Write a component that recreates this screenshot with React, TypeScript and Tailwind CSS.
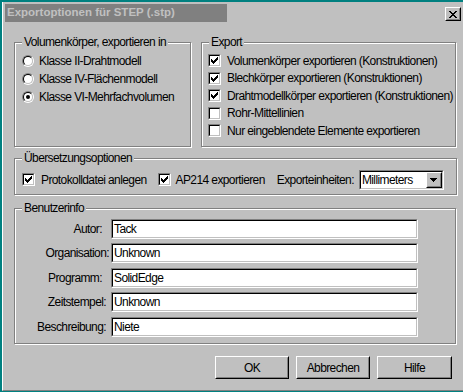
import React from "react";

const FONT = { fontFamily: '"Liberation Sans", Arial, sans-serif' };

function Sunken({ className = "", children }: { className?: string; children?: React.ReactNode }) {
  return (
    <div className={"border border-t-[#808080] border-l-[#808080] border-b-white border-r-white " + className}>
      <div className="w-full h-full border border-t-black border-l-black border-b-[#c0c0c0] border-r-[#c0c0c0] bg-white overflow-hidden">
        {children}
      </div>
    </div>
  );
}

function Raised({ className = "", children }: { className?: string; children?: React.ReactNode }) {
  return (
    <div className={"border border-t-white border-l-white border-b-black border-r-black bg-[#c0c0c0] " + className}>
      <div className="w-full h-full border border-t-[#c0c0c0] border-l-[#c0c0c0] border-b-[#808080] border-r-[#808080] flex items-center justify-center">
        {children}
      </div>
    </div>
  );
}

function CheckMark() {
  return (
    <svg width="7" height="7" viewBox="0 0 7 7" shapeRendering="crispEdges" className="block">
      <path
        fill="#000"
        d="M6 0h1v1h-1zM5 1h2v1h-2zM0 2h1v1h-1zM4 2h3v1h-3zM0 3h2v1h-2zM3 3h3v1h-3zM0 4h5v1h-5zM1 5h3v1h-3zM2 6h1v1h-1z"
      />
    </svg>
  );
}

function Checkbox({ checked }: { checked: boolean }) {
  return (
    <Sunken className="w-[13px] h-[13px] shrink-0">
      <div className="w-full h-full flex items-center justify-center">{checked ? <CheckMark /> : null}</div>
    </Sunken>
  );
}

function Radio({ checked }: { checked: boolean }) {
  return (
    <div className="w-[12px] h-[12px] rounded-full border border-t-[#808080] border-l-[#808080] border-b-white border-r-white shrink-0">
      <div className="w-full h-full rounded-full border border-t-black border-l-black border-b-[#c0c0c0] border-r-[#c0c0c0] bg-white flex items-center justify-center">
        {checked ? <div className="w-[4px] h-[4px] rounded-full bg-black" /> : null}
      </div>
    </div>
  );
}

function Group({ label, className = "", children }: { label: string; className?: string; children?: React.ReactNode }) {
  return (
    <div className={"relative border border-[#808080] shadow-[inset_1px_1px_0_#fff,1px_1px_0_#fff] " + className}>
      <span className="absolute left-[7px] top-[-8px] px-[2px] bg-[#c0c0c0] leading-[15px] whitespace-nowrap">{label}</span>
      {children}
    </div>
  );
}

function TextRow({ label, value, pr, mt }: { label: string; value: string; pr: string; mt: string }) {
  return (
    <div className={"flex items-center h-[20px] " + mt}>
      <div className={"w-[96px] text-right whitespace-nowrap " + pr}>{label}</div>
      <Sunken className="w-[307px] h-[20px]">
        <div className="h-full flex items-center pl-[1px] leading-none">{value}</div>
      </Sunken>
    </div>
  );
}

export default function App() {
  return (
    <div className="w-[463px] h-[392px] bg-[#008080] pt-[2px] pl-[2px] overflow-hidden">
      <div
        className="w-[461px] h-[389px] bg-[#c0c0c0] border-l border-l-white border-b border-b-[#808080] flex flex-col text-[12px] tracking-[-0.6px] text-black"
        style={FONT}
      >
        {/* title row */}
        <div className="flex items-start mt-[2px]">
          <div className="ml-[2px] w-[222px] h-[18px] bg-[#808080] flex items-center pl-[2px]">
            <span className="text-[#c0c0c0] font-bold text-[11.5px] tracking-normal whitespace-nowrap">
              Exportoptionen für STEP (.stp)
            </span>
          </div>
          <Raised className="ml-auto mr-[2px] mt-[3px] w-[16px] h-[14px]">
            <svg width="8" height="7" viewBox="0 0 8 7" shapeRendering="crispEdges" className="block">
              <path
                fill="#000"
                d="M0 0h2v1h-2zM6 0h2v1h-2zM1 1h2v1h-2zM5 1h2v1h-2zM2 2h4v1h-4zM3 3h2v1h-2zM2 4h4v1h-4zM1 5h2v1h-2zM5 5h2v1h-2zM0 6h2v1h-2zM6 6h2v1h-2z"
              />
            </svg>
          </Raised>
        </div>

        {/* top groups */}
        <div className="flex mt-[20px] ml-[11px] gap-[10px]">
          <Group label="Volumenkörper, exportieren in" className="w-[177px] h-[105px]">
            <div className="flex flex-col pt-[9px] pl-[7px]">
              {[
                ["Klasse II-Drahtmodell", false],
                ["Klasse IV-Flächenmodell", false],
                ["Klasse VI-Mehrfachvolumen", true],
              ].map(([t, c]) => (
                <div key={t as string} className="flex items-center h-[18px] gap-[5px] whitespace-nowrap">
                  <Radio checked={c as boolean} />
                  <span>{t as string}</span>
                </div>
              ))}
            </div>
          </Group>
          <Group label="Export" className="w-[255px] h-[105px]">
            <div className="flex flex-col pt-[9px] pl-[6px]">
              {[
                ["Volumenkörper exportieren (Konstruktionen)", true, "h-[17px]"],
                ["Blechkörper exportieren (Konstruktionen)", true, "h-[18px]"],
                ["Drahtmodellkörper exportieren (Konstruktionen)", true, "h-[17px]"],
                ["Rohr-Mittellinien", false, "h-[18px]"],
                ["Nur eingeblendete Elemente exportieren", false, "h-[17px]"],
              ].map(([t, c, h]) => (
                <div key={t as string} className={"flex items-center gap-[6px] whitespace-nowrap " + h}>
                  <Checkbox checked={c as boolean} />
                  <span>{t as string}</span>
                </div>
              ))}
            </div>
          </Group>
        </div>

        {/* Übersetzungsoptionen */}
        <Group label="Übersetzungsoptionen" className="mt-[11px] ml-[11px] w-[443px] h-[37px]">
          <div className="flex items-center h-full pt-[6px] pl-[7px] whitespace-nowrap">
            <Checkbox checked />
            <span className="ml-[6px]">Protokolldatei anlegen</span>
            <div className="ml-[11px]">
              <Checkbox checked />
            </div>
            <span className="ml-[5px]">AP214 exportieren</span>
            <span className="ml-[12px]">Exporteinheiten:</span>
            <Sunken className="ml-[5px] w-[85px] h-[20px] shrink-0">
              <div className="flex items-center h-full pl-[1px] leading-none">
                <span>Millimeters</span>
                <Raised className="ml-auto w-[16px] h-[16px] shrink-0">
                  <svg width="7" height="4" viewBox="0 0 7 4" shapeRendering="crispEdges" className="block">
                    <path fill="#000" d="M0 0h7v1h-7zM1 1h5v1h-5zM2 2h3v1h-3zM3 3h1v1h-1z" />
                  </svg>
                </Raised>
              </div>
            </Sunken>
          </div>
        </Group>

        {/* Benutzerinfo */}
        <Group label="Benutzerinfo" className="mt-[13px] ml-[11px] w-[442px] h-[136px]">
          <div className="flex flex-col pt-[10px]">
            <TextRow label="Autor:" value="Tack" pr="pr-[9px]" mt="" />
            <TextRow label="Organisation:" value="Unknown" pr="pr-[2px]" mt="mt-[4px]" />
            <TextRow label="Programm:" value="SolidEdge" pr="pr-[9px]" mt="mt-[5px]" />
            <TextRow label="Zeitstempel:" value="Unknown" pr="pr-[5px]" mt="mt-[4px]" />
            <TextRow label="Beschreibung:" value="Niete" pr="pr-[5px]" mt="mt-[5px]" />
          </div>
        </Group>

        {/* buttons */}
        <div className="flex mt-[12px] ml-[212px] gap-[7px]">
          <Raised className="w-[74px] h-[23px]">OK</Raised>
          <Raised className="w-[74px] h-[23px]">Abbrechen</Raised>
          <Raised className="w-[75px] h-[23px]">Hilfe</Raised>
        </div>
      </div>
    </div>
  );
}
